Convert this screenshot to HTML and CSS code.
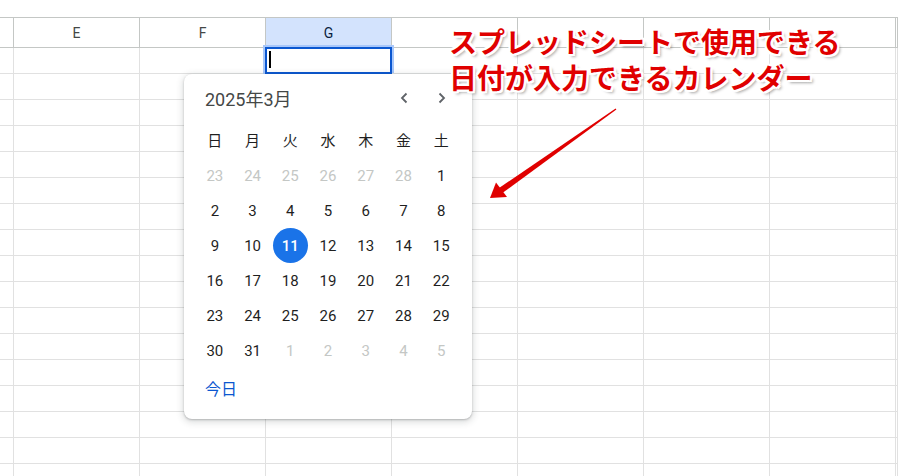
FILE: index.html
```html
<!DOCTYPE html>
<html lang="ja">
<head>
    <meta charset="UTF-8">
    <meta name="viewport" content="width=device-width, initial-scale=1.0">
    <title>日付選択カレンダー</title>
    <link rel="stylesheet" href="styles.css">
</head>
<body>
    <div class="sheet">
        <div class="head-row">
            <div class="hcell corner"></div>
            <div class="hcell">E</div>
            <div class="hcell">F</div>
            <div class="hcell active">G</div>
            <div class="hcell"></div>
            <div class="hcell"></div>
            <div class="hcell"></div>
            <div class="hcell"></div>
            <div class="hcell"></div>
        </div>
        <div class="row"><div class="cell corner"></div><div class="cell"></div><div class="cell"></div><div class="cell current"><div class="selection"><span class="caret"></span></div></div><div class="cell"></div><div class="cell"></div><div class="cell"></div><div class="cell"></div><div class="cell"></div></div>
        <div class="row"><div class="cell corner"></div><div class="cell"></div><div class="cell"></div><div class="cell"></div><div class="cell"></div><div class="cell"></div><div class="cell"></div><div class="cell"></div><div class="cell"></div></div>
        <div class="row"><div class="cell corner"></div><div class="cell"></div><div class="cell"></div><div class="cell"></div><div class="cell"></div><div class="cell"></div><div class="cell"></div><div class="cell"></div><div class="cell"></div></div>
        <div class="row"><div class="cell corner"></div><div class="cell"></div><div class="cell"></div><div class="cell"></div><div class="cell"></div><div class="cell"></div><div class="cell"></div><div class="cell"></div><div class="cell"></div></div>
        <div class="row"><div class="cell corner"></div><div class="cell"></div><div class="cell"></div><div class="cell"></div><div class="cell"></div><div class="cell"></div><div class="cell"></div><div class="cell"></div><div class="cell"></div></div>
        <div class="row"><div class="cell corner"></div><div class="cell"></div><div class="cell"></div><div class="cell"></div><div class="cell"></div><div class="cell"></div><div class="cell"></div><div class="cell"></div><div class="cell"></div></div>
        <div class="row"><div class="cell corner"></div><div class="cell"></div><div class="cell"></div><div class="cell"></div><div class="cell"></div><div class="cell"></div><div class="cell"></div><div class="cell"></div><div class="cell"></div></div>
        <div class="row"><div class="cell corner"></div><div class="cell"></div><div class="cell"></div><div class="cell"></div><div class="cell"></div><div class="cell"></div><div class="cell"></div><div class="cell"></div><div class="cell"></div></div>
        <div class="row"><div class="cell corner"></div><div class="cell"></div><div class="cell"></div><div class="cell"></div><div class="cell"></div><div class="cell"></div><div class="cell"></div><div class="cell"></div><div class="cell"></div></div>
        <div class="row"><div class="cell corner"></div><div class="cell"></div><div class="cell"></div><div class="cell"></div><div class="cell"></div><div class="cell"></div><div class="cell"></div><div class="cell"></div><div class="cell"></div></div>
        <div class="row"><div class="cell corner"></div><div class="cell"></div><div class="cell"></div><div class="cell"></div><div class="cell"></div><div class="cell"></div><div class="cell"></div><div class="cell"></div><div class="cell"></div></div>
        <div class="row"><div class="cell corner"></div><div class="cell"></div><div class="cell"></div><div class="cell"></div><div class="cell"></div><div class="cell"></div><div class="cell"></div><div class="cell"></div><div class="cell"></div></div>
        <div class="row"><div class="cell corner"></div><div class="cell"></div><div class="cell"></div><div class="cell"></div><div class="cell"></div><div class="cell"></div><div class="cell"></div><div class="cell"></div><div class="cell"></div></div>
        <div class="row"><div class="cell corner"></div><div class="cell"></div><div class="cell"></div><div class="cell"></div><div class="cell"></div><div class="cell"></div><div class="cell"></div><div class="cell"></div><div class="cell"></div></div>
        <div class="row"><div class="cell corner"></div><div class="cell"></div><div class="cell"></div><div class="cell"></div><div class="cell"></div><div class="cell"></div><div class="cell"></div><div class="cell"></div><div class="cell"></div></div>
        <div class="row"><div class="cell corner"></div><div class="cell"></div><div class="cell"></div><div class="cell"></div><div class="cell"></div><div class="cell"></div><div class="cell"></div><div class="cell"></div><div class="cell"></div></div>
        <div class="row"><div class="cell corner"></div><div class="cell"></div><div class="cell"></div><div class="cell"></div><div class="cell"></div><div class="cell"></div><div class="cell"></div><div class="cell"></div><div class="cell"></div></div>
    </div>

    <div class="picker">
        <div class="picker-head">
            <div class="picker-title">2025年3月</div>
            <div class="nav">
                <svg width="8" height="12" viewBox="0 0 8 12"><path d="M6.5 1.5 2 6l4.5 4.5" fill="none" stroke="#5f6368" stroke-width="1.8"/></svg>
            </div>
            <div class="nav">
                <svg width="8" height="12" viewBox="0 0 8 12"><path d="M1.5 1.5 6 6l-4.5 4.5" fill="none" stroke="#5f6368" stroke-width="1.8"/></svg>
            </div>
        </div>
        <div class="days">
            <span class="dow">日</span><span class="dow">月</span><span class="dow">火</span><span class="dow">水</span><span class="dow">木</span><span class="dow">金</span><span class="dow">土</span>
            <span class="muted">23</span><span class="muted">24</span><span class="muted">25</span><span class="muted">26</span><span class="muted">27</span><span class="muted">28</span><span>1</span>
            <span>2</span><span>3</span><span>4</span><span>5</span><span>6</span><span>7</span><span>8</span>
            <span>9</span><span>10</span><span class="picked"><b>11</b></span><span>12</span><span>13</span><span>14</span><span>15</span>
            <span>16</span><span>17</span><span>18</span><span>19</span><span>20</span><span>21</span><span>22</span>
            <span>23</span><span>24</span><span>25</span><span>26</span><span>27</span><span>28</span><span>29</span>
            <span>30</span><span>31</span><span class="muted">1</span><span class="muted">2</span><span class="muted">3</span><span class="muted">4</span><span class="muted">5</span>
        </div>
        <div class="picker-foot">今日</div>
    </div>

    <div class="note">
        <p>スプレッドシートで使用できる</p>
        <p>日付が入力できるカレンダー</p>
    </div>

    <svg class="arrow" width="898" height="476" viewBox="0 0 898 476">
        <polygon points="615.6,108.4 616.4,109.6 501.7,193.5 498.3,188.5" fill="#e00000"/>
        <polygon points="490,198 496,182.5 507,197" fill="#e00000"/>
    </svg>
</body>
</html>
```

FILE: styles.css
```css
* {
    box-sizing: border-box;
    margin: 0;
    padding: 0;
}

body {
    position: relative;
    width: 898px;
    height: 476px;
    overflow: hidden;
    background-color: #fff;
    font-family: Roboto, "Noto Sans CJK JP", sans-serif;
    color: #1f1f1f;
}

/* spreadsheet grid */

.sheet {
    width: 898px;
    height: 476px;
    overflow: hidden;
    padding-top: 17px;
}

.head-row,
.row {
    display: flex;
}

.hcell {
    flex: none;
    display: flex;
    align-items: center;
    justify-content: center;
    width: 126px;
    height: 31px;
    border-top: 1px solid #c4c7c5;
    border-bottom: 1px solid #c4c7c5;
    border-right: 1px solid #c4c7c5;
    font-size: 14px;
    color: #444746;
}

.hcell.active {
    background-color: #d3e3fd;
    color: #0b1f3f;
}

.cell {
    flex: none;
    position: relative;
    width: 126px;
    height: 26px;
    border-right: 1px solid #e1e1e1;
    border-bottom: 1px solid #e1e1e1;
}

.head-row .hcell:last-child,
.row .cell:last-child {
    flex: 1;
    width: auto;
    min-width: 0;
}

.corner {
    width: 14px;
}

.selection {
    position: absolute;
    left: -1px;
    top: -1px;
    width: 127px;
    height: 27px;
    border: 2px solid #0b57d0;
    box-shadow: 0 0 0 2px #a8c7fa;
}

.caret {
    position: absolute;
    left: 2px;
    top: 2px;
    width: 2px;
    height: 17px;
    background-color: #000;
}

/* date picker */

.picker {
    position: absolute;
    left: 184px;
    top: 74px;
    width: 288px;
    padding: 6px 12px 12px;
    background-color: #fff;
    border-radius: 8px;
    box-shadow: 0 1px 2px rgba(60, 64, 67, 0.3), 0 2px 6px 2px rgba(60, 64, 67, 0.15);
}

.picker-head {
    display: flex;
    align-items: center;
    height: 36px;
    padding-left: 9px;
}

.picker-title {
    flex: 1;
    font-size: 18px;
    color: #444746;
}

.nav {
    display: flex;
    align-items: center;
    justify-content: center;
    width: 37.7px;
    padding-left: 2px;
}

.days {
    display: grid;
    grid-template-columns: repeat(7, 1fr);
    grid-auto-rows: 35px;
    margin-top: 7px;
}

.days span {
    display: flex;
    align-items: center;
    justify-content: center;
    font-size: 15px;
    color: #1f1f1f;
}

.days .dow {
    padding-bottom: 2px;
}

.days .muted {
    color: #c4c7c5;
}

.days .picked b {
    display: flex;
    align-items: center;
    justify-content: center;
    width: 35px;
    height: 35px;
    border-radius: 50%;
    background-color: #1a73e8;
    color: #fff;
    font-weight: 500;
}

.picker-foot {
    display: flex;
    align-items: center;
    height: 39px;
    padding-left: 9px;
    font-size: 16px;
    color: #0b57d0;
}

/* annotation */

.note {
    position: absolute;
    left: 449px;
    top: 23px;
    font-family: "Noto Sans CJK JP", sans-serif;
    font-size: 28px;
    font-weight: 700;
    line-height: 36px;
    color: #e00000;
    white-space: nowrap;
    text-shadow:
        2px 0 #fff, -2px 0 #fff, 0 2px #fff, 0 -2px #fff,
        2px 2px #fff, -2px -2px #fff, 2px -2px #fff, -2px 2px #fff,
        3px 3px 3px rgba(0, 0, 0, 0.35);
}

.arrow {
    position: absolute;
    left: 0;
    top: 0;
    pointer-events: none;
}
```
